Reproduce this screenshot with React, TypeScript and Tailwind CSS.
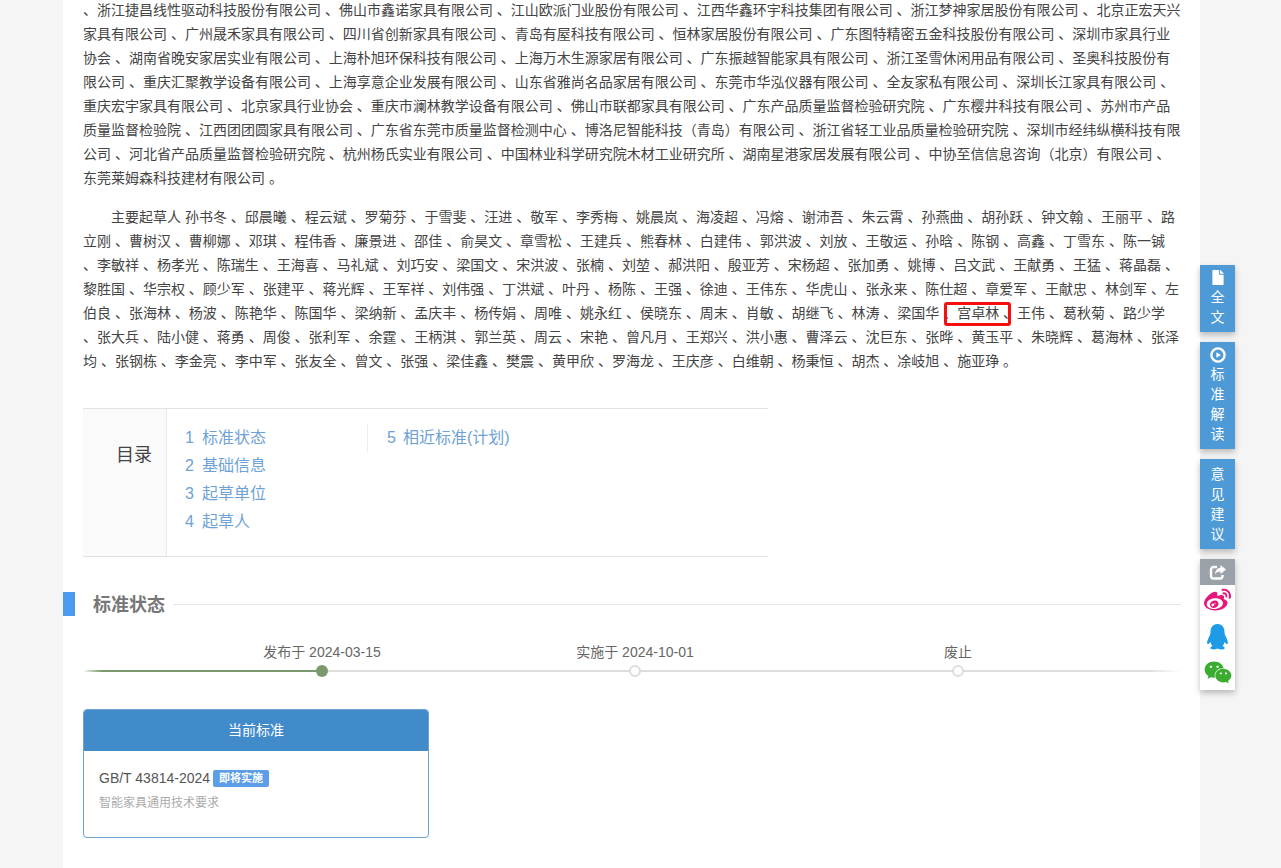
import { FaFile, FaWeibo, FaWeixin } from 'react-icons/fa';

const units =
    '、浙江捷昌线性驱动科技股份有限公司 、佛山市鑫诺家具有限公司 、江山欧派门业股份有限公司 、江西华鑫环宇科技集团有限公司 、浙江梦神家居股份有限公司 、北京正宏天兴家具有限公司 、广州晟禾家具有限公司 、四川省创新家具有限公司 、青岛有屋科技有限公司 、恒林家居股份有限公司 、广东图特精密五金科技股份有限公司 、深圳市家具行业协会 、湖南省晚安家居实业有限公司 、上海朴旭环保科技有限公司 、上海万木生源家居有限公司 、广东振越智能家具有限公司 、浙江圣雪休闲用品有限公司 、圣奥科技股份有限公司 、重庆汇聚教学设备有限公司 、上海享意企业发展有限公司 、山东省雅尚名品家居有限公司 、东莞市华泓仪器有限公司 、全友家私有限公司 、深圳长江家具有限公司 、重庆宏宇家具有限公司 、北京家具行业协会 、重庆市澜林教学设备有限公司 、佛山市联都家具有限公司 、广东产品质量监督检验研究院 、广东樱井科技有限公司 、苏州市产品质量监督检验院 、江西团团圆家具有限公司 、广东省东莞市质量监督检测中心 、博洛尼智能科技（青岛）有限公司 、浙江省轻工业品质量检验研究院 、深圳市经纬纵横科技有限公司 、河北省产品质量监督检验研究院 、杭州杨氏实业有限公司 、中国林业科学研究院木材工业研究所 、湖南星港家居发展有限公司 、中协至信信息咨询（北京）有限公司 、东莞莱姆森科技建材有限公司 。';

const peopleBefore =
    '主要起草人 孙书冬 、邱晨曦 、程云斌 、罗菊芬 、于雪斐 、汪进 、敬军 、李秀梅 、姚晨岚 、海凌超 、冯熔 、谢沛吾 、朱云霄 、孙燕曲 、胡孙跃 、钟文翰 、王丽平 、路立刚 、曹树汉 、曹柳娜 、邓琪 、程伟香 、廉景进 、邵佳 、俞昊文 、章雪松 、王建兵 、熊春林 、白建伟 、郭洪波 、刘放 、王敬运 、孙晗 、陈钢 、高鑫 、丁雪东 、陈一铖 、李敏祥 、杨孝光 、陈瑞生 、王海喜 、马礼斌 、刘巧安 、梁国文 、宋洪波 、张楠 、刘堃 、郝洪阳 、殷亚芳 、宋杨超 、张加勇 、姚博 、吕文武 、王献勇 、王猛 、蒋晶磊 、黎胜国 、华宗权 、顾少军 、张建平 、蒋光辉 、王军祥 、刘伟强 、丁洪斌 、叶丹 、杨陈 、王强 、徐迪 、王伟东 、华虎山 、张永来 、陈仕超 、章爱军 、王献忠 、林剑军 、左伯良 、张海林 、杨波 、陈艳华 、陈国华 、梁纳新 、孟庆丰 、杨传娟 、周唯 、姚永红 、侯晓东 、周末 、肖敏 、胡继飞 、林涛 、梁国华 、';

const peopleAfter =
    ' 、王伟 、葛秋菊 、路少学 、张大兵 、陆小健 、蒋勇 、周俊 、张利军 、余霆 、王柄淇 、郭兰英 、周云 、宋艳 、曾凡月 、王郑兴 、洪小惠 、曹泽云 、沈巨东 、张晔 、黄玉平 、朱晓辉 、葛海林 、张泽均 、张钢栋 、李金亮 、李中军 、张友全 、曾文 、张强 、梁佳鑫 、樊震 、黄甲欣 、罗海龙 、王庆彦 、白维朝 、杨秉恒 、胡杰 、凃岐旭 、施亚琤 。';

const toc = ['标准状态', '基础信息', '起草单位', '起草人'];

function SideButton({ icon, label }: { icon?: React.ReactNode; label: string }) {
    return (
        <div className="flex flex-col items-center bg-[#4d9ad6] py-[5px] text-[14px] leading-[20px] text-white shadow-[0_3px_6px_rgba(0,0,0,0.25)]">
            {icon && <div className="h-[17px]">{icon}</div>}
            {label.split('').map((c, i) => (
                <span key={i}>{c}</span>
            ))}
        </div>
    );
}

function Milestone({ label, active }: { label: string; active?: boolean }) {
    return (
        <div className="flex w-[160px] flex-col items-center">
            <div className="text-[14px] leading-[20px] text-[#666]">{label}</div>
            <div
                className={
                    active
                        ? 'mt-[3px] h-[12px] w-[12px] rounded-full bg-[#7a9a6e]'
                        : 'mt-[3px] h-[12px] w-[12px] rounded-full border-2 border-[#dddddd] bg-white'
                }
            />
        </div>
    );
}

export default function App() {
    return (
        <div className="relative h-[868px] overflow-hidden bg-[#f5f5f5] font-['Liberation_Sans','Noto_Sans_CJK_SC',sans-serif]">
            <div className="ml-[63px] h-full w-[1137px] overflow-hidden bg-white">
                <div className="-mt-[2px] pl-[20px] pr-[19px] text-[14px] leading-[24px] text-[#444]">
                    <p>{units}</p>
                    <p className="mt-[15px] indent-[28px]">
                        {peopleBefore}
                        <span className="relative">
                            宫卓林
                            <span className="absolute -left-[13px] -right-[12px] -top-[3px] h-[24px] rounded-[3px] border-[3px] border-[#f5100f]" />
                        </span>
                        {peopleAfter}
                    </p>
                </div>

                <div className="ml-[20px] mt-[35px] flex h-[149px] w-[685px] border-y border-[#e3e3e3]">
                    <div className="w-[84px] border-r border-[#e9e9e9] bg-[#fafafa] pl-[33px] pt-[32px] text-[18px] leading-[28px] text-[#444]">
                        目录
                    </div>
                    <div className="flex pt-[15px] text-[16px] leading-[28px] text-[#6ea2d6]">
                        <div className="w-[200px] pl-[18px]">
                            {toc.map((t, i) => (
                                <div key={t} className="flex gap-[8px]">
                                    <span className="w-[9px]">{i + 1}</span>
                                    <span>{t}</span>
                                </div>
                            ))}
                        </div>
                        <div className="h-[28px] border-l border-[#eeeeee] pl-[19px]">
                            <div className="flex gap-[7px]">
                                <span className="w-[9px]">5</span>
                                <span>相近标准(计划)</span>
                            </div>
                        </div>
                    </div>
                </div>

                <div className="mt-[35px] flex items-center pr-[19px]">
                    <div className="h-[24px] w-[12px] bg-[#4a9bf0]" />
                    <div className="ml-[18px] h-[24px] text-[18px] font-bold leading-[26px] text-[#777]">标准状态</div>
                    <div className="ml-[8px] h-px flex-1 bg-[#e5e5e5]" />
                </div>

                <div className="relative ml-[20px] mr-[19px] mt-[26px] h-[40px]">
                    <div className="absolute left-0 right-0 top-[28px] h-[2px] bg-[linear-gradient(to_right,transparent,#dddddd_3%,#dddddd_97%,transparent)]" />
                    <div className="absolute left-0 top-[28px] h-[2px] w-[239px] bg-[linear-gradient(to_right,transparent,#7a9a6e_8%)]" />
                    <div className="relative flex gap-[153px] pl-[159px]">
                        <Milestone label="发布于 2024-03-15" active />
                        <Milestone label="实施于 2024-10-01" />
                        <div className="ml-[10px]">
                            <Milestone label="废止" />
                        </div>
                    </div>
                </div>

                <div className="ml-[20px] mt-[27px] h-[129px] w-[346px] overflow-hidden rounded-[4px] border border-[#6fa3d0]">
                    <div className="h-[41px] bg-[#428bca] text-center text-[14px] leading-[41px] text-white">当前标准</div>
                    <div className="px-[15px] pt-[17px]">
                        <div className="flex items-center gap-[3px] text-[14px] leading-[20px] text-[#555]">
                            GB/T 43814-2024
                            <span className="h-[17px] w-[56px] rounded-[2px] bg-[#5c9ee8] text-center text-[11px] font-bold leading-[17px] text-white">
                                即将实施
                            </span>
                        </div>
                        <div className="mt-[5px] text-[12px] leading-[20px] text-[#aaaaaa]">智能家具通用技术要求</div>
                    </div>
                </div>
            </div>

            <div className="absolute left-[1200px] top-[265px] flex w-[35px] flex-col gap-[10px]">
                <SideButton icon={<FaFile className="h-[15px] w-[12px]" />} label="全文" />
                <SideButton
                    icon={
                        <svg viewBox="0 0 16 16" className="h-[16px] w-[16px]" fill="none">
                            <circle cx="8" cy="8" r="6.6" stroke="white" strokeWidth="2.4" />
                            <path d="M6.4 5.2 L11 8 L6.4 10.8 Z" fill="white" />
                        </svg>
                    }
                    label="标准解读"
                />
                <SideButton label="意见建议" />
                <div className="shadow-[0_3px_6px_rgba(0,0,0,0.25)]">
                    <div className="flex h-[26px] items-center justify-center bg-[#9ba1a8]">
                        <svg viewBox="0 0 18 16" className="h-[16px] w-[18px]" fill="none">
                            <path d="M13.5 11 V12 A2.5 2.5 0 0 1 11 14.5 H4.5 A2.5 2.5 0 0 1 2 12 V5.5 A2.5 2.5 0 0 1 4.5 3 H8" stroke="white" strokeWidth="2.4" />
                            <path d="M11.5 1 L17 5.5 L11.5 10 V7.4 C9 7.4 7.2 8.2 6 10.2 C6.2 6.8 8.4 4 11.5 3.8 Z" fill="white" />
                        </svg>
                    </div>
                    <div className="flex h-[105px] flex-col items-center bg-white pt-[2px]">
                        <FaWeibo className="h-[27px] w-[27px] text-[#e5177b]" />
                        <svg viewBox="0 0 24 26" className="mt-[10px] h-[26px] w-[25px]">
                            <path
                                d="M12 0C7 0 5 4 5 8C5 10 4.5 11 3.5 13C2 16 1 19 2 20C3 20.5 4 19 5 18C5.5 20 6 21 7 22C5.5 22.5 4.5 23.5 5 24.5C5.5 25.5 9 26 12 24.5C15 26 18.5 25.5 19 24.5C19.5 23.5 18.5 22.5 17 22C18 21 18.5 20 19 18C20 19 21 20.5 22 20C23 19 22 16 20.5 13C19.5 11 19 10 19 8C19 4 17 0 12 0Z"
                                fill="#1d9be6"
                            />
                        </svg>
                        <FaWeixin className="mt-[10px] h-[25px] w-[28px] text-[#3aad2f]" />
                    </div>
                </div>
            </div>
        </div>
    );
}
